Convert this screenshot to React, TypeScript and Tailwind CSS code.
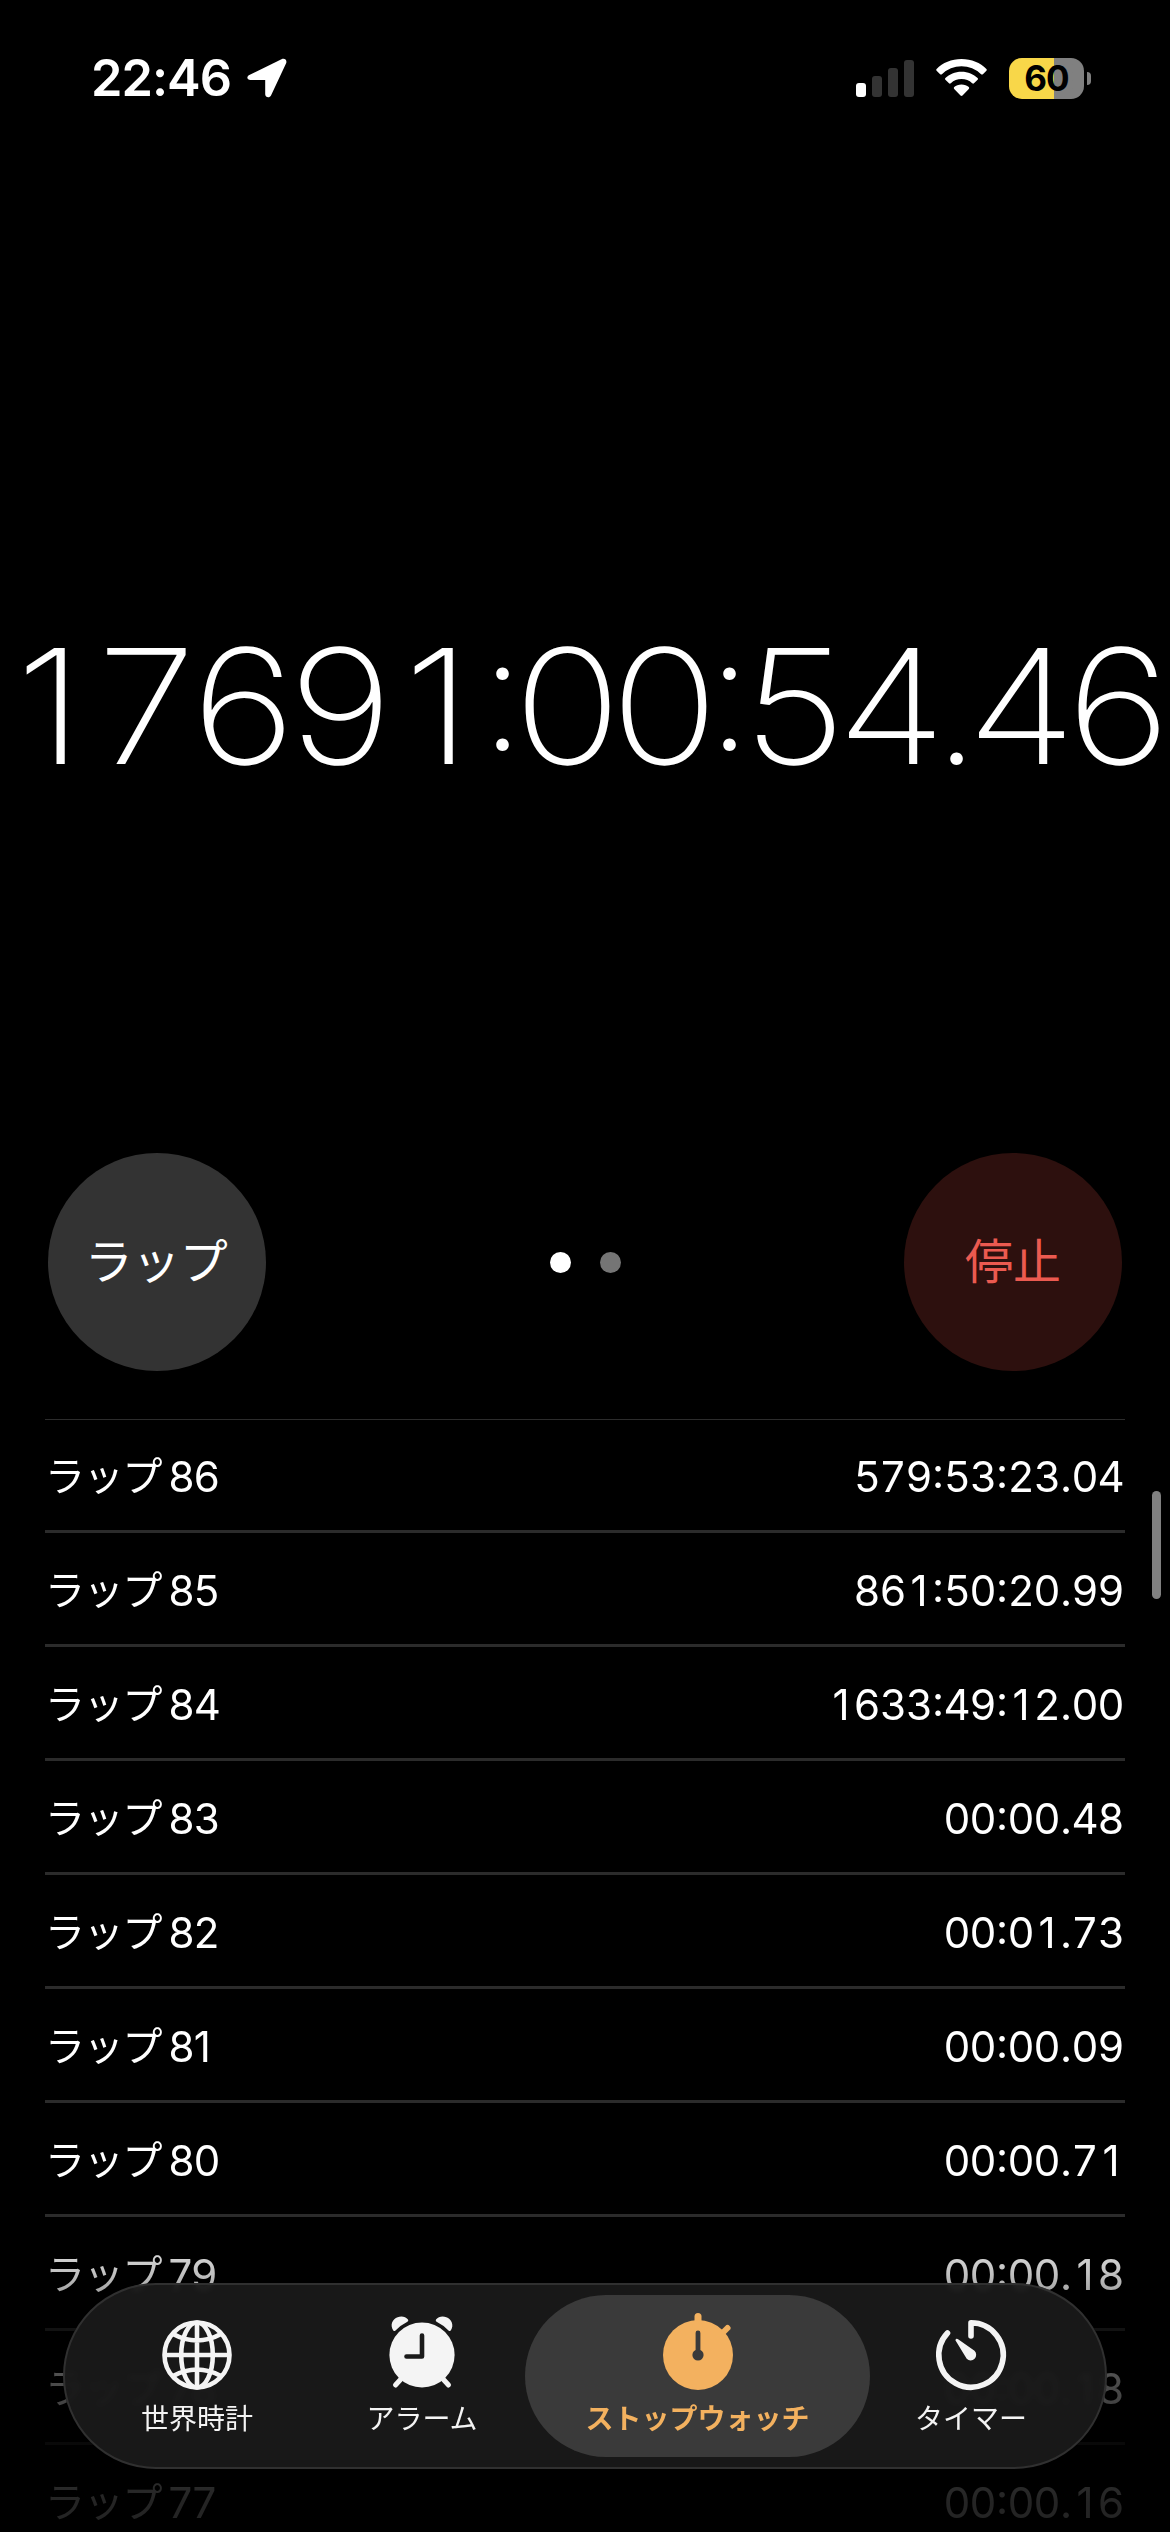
import type { ReactNode } from "react";

const laps = [
  { n: 86, time: "579:53:23.04" },
  { n: 85, time: "861:50:20.99" },
  { n: 84, time: "1633:49:12.00" },
  { n: 83, time: "00:00.48" },
  { n: 82, time: "00:01.73" },
  { n: 81, time: "00:00.09" },
  { n: 80, time: "00:00.71" },
  { n: 79, time: "00:00.18" },
  { n: 78, time: "00:00.18" },
  { n: 77, time: "00:00.16" },
];

function LocationArrow() {
  return (
    <svg className="ml-[16px] h-[40px] w-[40px]" viewBox="0 0 40 40" fill="white">
      <path d="M2.3 17 L34.5 1.2 C37.8 -.3 40.5 2.2 39 5.5 L24 37.5 C22.6 40.3 18.2 39.6 18.2 36.2 L18.2 22 L3.6 22 C-.2 21.9 -.7 18.5 2.3 17 Z" />
    </svg>
  );
}

function Signal() {
  return (
    <div className="flex h-[38px] items-end gap-[6px]">
      <div className="h-[14px] w-[10px] rounded-[3px] bg-white" />
      <div className="h-[21px] w-[10px] rounded-[3px] bg-[#333]" />
      <div className="h-[29px] w-[10px] rounded-[3px] bg-[#333]" />
      <div className="h-[37px] w-[10px] rounded-[3px] bg-[#333]" />
    </div>
  );
}

function Wifi() {
  return (
    <svg className="ml-[22px] h-[38px] w-[51px]" viewBox="0 0 51 38" fill="white">
      <path d="M25.5 0 C35.5 0 44.4 3.8 50.4 9.9 Q51.2 10.8 50.4 11.7 L46.9 15.2 Q46 16 45.1 15.2 A28 28 0 0 0 5.9 15.2 Q5 16 4.1 15.2 L.6 11.7 Q-.2 10.8 .6 9.9 C6.6 3.8 15.5 0 25.5 0 Z" />
      <path d="M25.5 12.7 C32 12.7 37.7 15.2 41.6 19 Q42.5 19.9 41.6 20.8 L38 24.3 Q37.2 25.1 36.2 24.3 A15.7 15.7 0 0 0 14.8 24.3 Q13.8 25.1 13 24.3 L9.4 20.8 Q8.5 19.9 9.4 19 C13.3 15.2 19 12.7 25.5 12.7 Z" />
      <path d="M25.5 25.5 C28.4 25.5 31 26.5 32.8 28.1 Q33.7 29 32.8 29.9 L26.5 36.6 Q25.5 37.5 24.5 36.6 L18.2 29.9 Q17.3 29 18.2 28.1 C20 26.5 22.6 25.5 25.5 25.5 Z" />
    </svg>
  );
}

function Battery() {
  return (
    <div className="ml-[22px] flex items-center">
      <div className="flex h-[41px] w-[75px] items-center justify-center rounded-[13px] bg-linear-to-r from-[#f8d749] from-60% to-[#808080] to-60% text-[35px] leading-none font-bold tracking-[-1px] text-black">
        60
      </div>
      <div className="ml-[3px] h-[13px] w-[4px] rounded-r-full bg-[#808080]" />
    </div>
  );
}

function StatusBar() {
  return (
    <header className="flex h-[156px] shrink-0 items-center justify-between pr-[79px] pl-[91px]">
      <div className="flex items-center text-[50.5px] leading-none font-semibold tracking-[-1px]">
        22:46
        <LocationArrow />
      </div>
      <div className="flex items-center">
        <Signal />
        <Wifi />
        <Battery />
      </div>
    </header>
  );
}

/* Monospaced digits built from the proportional glyphs; separators get a narrower cell. */
function Digits({ value, digit, separator }: { value: string; digit: string; separator: string }) {
  return (
    <span className="flex">
      {value.split("").map((c, i) => (
        <span key={i} className={`flex justify-center ${c === ":" || c === "." ? separator : digit} ${c === ":" ? "relative -top-[0.09em]" : ""}`}>
          {c}
        </span>
      ))}
    </span>
  );
}

function GlobeIcon() {
  return (
    <svg className="h-[84px] w-[84px]" viewBox="-42 -42 84 84" fill="none" stroke="#f4f4f4" strokeWidth="4.6">
      <circle r="32.5" />
      <ellipse rx="15.8" ry="32.5" />
      <path d="M0 -33V33M-33 0H33M-24 -21Q0 -8 24 -21M-24 21Q0 8 24 21" />
    </svg>
  );
}

function AlarmIcon() {
  return (
    <svg className="h-[84px] w-[84px]" viewBox="-42 -42 84 84" fill="#f4f4f4">
      <path d="M-28.5 -24.3 A9.5 9.5 0 0 1 -30.3 -28.5 C-31.5 -37.5 -19 -42 -14 -35.5 Q-13 -34 -15 -33 Q-22 -29.5 -26.5 -24.5 Q-27.6 -23.5 -28.5 -24.3 Z" />
      <path d="M28.5 -24.3 A9.5 9.5 0 0 0 30.3 -28.5 C31.5 -37.5 19 -42 14 -35.5 Q13 -34 15 -33 Q22 -29.5 26.5 -24.5 Q27.6 -23.5 28.5 -24.3 Z" />
      <path d="M-21 24L-26.5 30M21 24L26.5 30" stroke="#f4f4f4" strokeWidth="5" strokeLinecap="round" />
      <circle r="32.6" />
      <path d="M0 -19.5V1.5H-15.5" fill="none" stroke="#1a1a1a" strokeWidth="4.6" strokeLinecap="round" strokeLinejoin="round" />
    </svg>
  );
}

function StopwatchIcon() {
  return (
    <svg className="h-[84px] w-[84px]" viewBox="-42 -42 84 84" fill="#f3b15f">
      <path d="M0 -38.5V-30" stroke="#f3b15f" strokeWidth="7" strokeLinecap="round" />
      <path d="M29.5 -27L22 -19.5" stroke="#f3b15f" strokeWidth="6" strokeLinecap="round" />
      <circle r="35" />
      <path d="M0 -22V0" stroke="#3a3a3a" strokeWidth="4.8" strokeLinecap="round" />
      <circle r="5.6" fill="#3a3a3a" />
    </svg>
  );
}

function TimerIcon() {
  return (
    <svg className="h-[84px] w-[84px]" viewBox="-42 -42 84 84" fill="none" stroke="#f4f4f4" strokeWidth="5.6" strokeLinecap="round" strokeLinejoin="round">
      <path d="M0 -19V-32.2A32.2 32.2 0 1 1 -23.5 -22" />
      <path d="M-15.6 -14.8Q-15 -17 -12.5 -15.6L3.5 -4.2A5.5 5.5 0 0 1 -4.3 3.8Z" fill="#f4f4f4" stroke="none" />
    </svg>
  );
}

function Tab({ label, className, children }: { label: string; className: string; children: ReactNode }) {
  return (
    <div className={`flex h-full flex-col items-center pt-[18px] ${className}`}>
      {children}
      <span className="mt-[2px] text-[28px] leading-[40px] whitespace-nowrap">{label}</span>
    </div>
  );
}

export default function App() {
  return (
    <div className="relative flex h-[2532px] w-[1170px] flex-col overflow-hidden bg-black font-['Inter','Noto_Sans_CJK_JP',sans-serif] text-white">
      <StatusBar />

      <div className="flex h-[997px] shrink-0 items-center pt-[103px] pl-px text-[159.5px] leading-none font-extralight">
        <Digits value="17691:00:54.46" digit="w-[97px] scale-x-[1.12]" separator="w-[33px]" />
      </div>

      <div className="flex h-[218px] shrink-0 items-center justify-between px-[48px] text-[48px]">
        <button className="size-[218px] rounded-full bg-[#333] pr-[2px] tracking-[-0.5px]">ラップ</button>
        <div className="flex gap-[29px]">
          <div className="size-[21px] rounded-full bg-white" />
          <div className="size-[21px] rounded-full bg-[#757575]" />
        </div>
        <button className="size-[218px] rounded-full bg-[#2d100e] text-[#eb5a50]">停止</button>
      </div>

      <div className="mx-[45px] mt-[48px] shrink-0 border-t border-[#2c2c2c] mask-[linear-gradient(to_bottom,black_796px,rgba(0,0,0,0.75)_856px,rgba(0,0,0,0.42)_910px,rgba(0,0,0,0.28)_971px,rgba(0,0,0,0.14)_1084px)]">
        {laps.map((lap) => (
          <div
            key={lap.n}
            className="flex h-[114px] items-center justify-between border-b-3 border-[#2b2b2b] pt-[4px] pr-px text-[42px] leading-none first:h-[113px]"
          >
            <span className="flex items-center">
              <span className="text-[40px] tracking-[-1.2px]">ラップ</span>
              <span className="ml-[7px] tracking-[-0.6px]">{lap.n}</span>
            </span>
            <Digits value={lap.time} digit="w-[26px]" separator="w-[12px]" />
          </div>
        ))}
      </div>

      <div className="absolute top-[1491px] right-[9px] h-[108px] w-[9px] rounded-full bg-[#808080]" />

      <nav className="absolute top-[2283px] left-[63px] flex h-[186px] w-[1044px] rounded-full border-2 border-[#303030] bg-[#1a1a1a]/92 p-[10px] text-[#f4f4f4] backdrop-blur-[3px]">
        <Tab label="世界時計" className="w-[244px]">
          <GlobeIcon />
        </Tab>
        <Tab label="アラーム" className="w-[206px]">
          <AlarmIcon />
        </Tab>
        <Tab label="ストップウォッチ" className="w-[345px] rounded-full bg-[#3a3a3a] font-bold text-[#f3b15f]">
          <StopwatchIcon />
        </Tab>
        <Tab label="タイマー" className="w-[202px]">
          <TimerIcon />
        </Tab>
      </nav>
    </div>
  );
}
